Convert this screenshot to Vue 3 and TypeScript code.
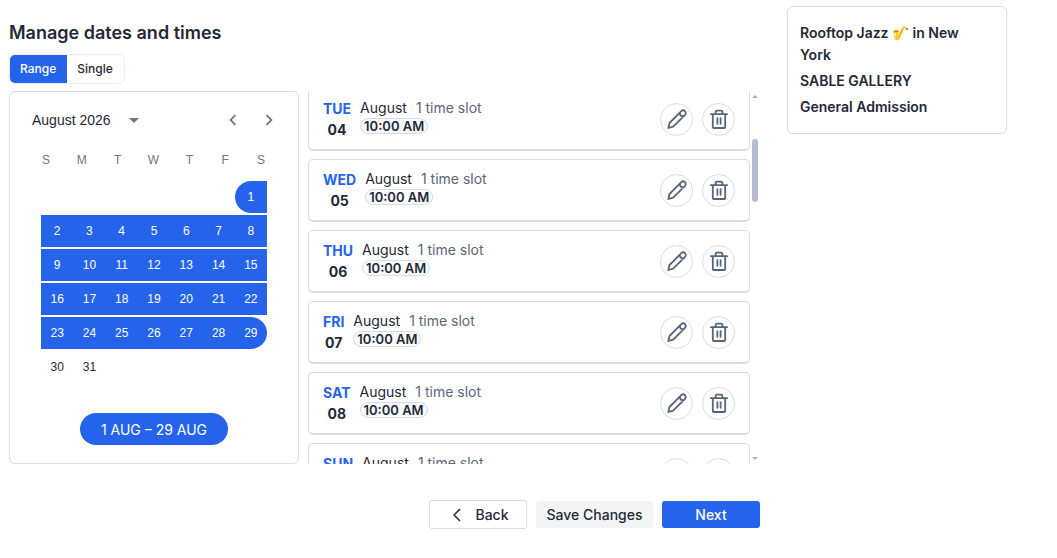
<script setup lang="ts">
import { computed, onMounted, ref } from 'vue'

interface DaySlot {
  day: number
  label: string
  weekday: string
}

const weekdayNames = ['SUN', 'MON', 'TUE', 'WED', 'THU', 'FRI', 'SAT']
const weekdayInitials = ['S', 'M', 'T', 'W', 'T', 'F', 'S']
const firstWeekday = 6
const rangeStart = 1
const rangeEnd = 29
const rowPitch = 71

const slots: DaySlot[] = Array.from({ length: rangeEnd }, (_, i) => ({
  day: i + 1,
  label: String(i + 1).padStart(2, '0'),
  weekday: weekdayNames[(firstWeekday + i) % 7],
}))

const days = Array.from({ length: 31 }, (_, i) => i + 1)
const mode = ref<'range' | 'single'>('range')

// The list only renders the rows inside its viewport; spacers stand in for the rest.
const list = ref<HTMLElement | null>(null)
const scrollTop = ref(3 * rowPitch + 3)
const viewHeight = ref(373)
const total = slots.length * rowPitch
const firstRow = computed(() => Math.floor(scrollTop.value / rowPitch))
const lastRow = computed(() => Math.min(slots.length, Math.ceil((scrollTop.value + viewHeight.value) / rowPitch)))
const visible = computed(() => slots.slice(firstRow.value, lastRow.value))
const before = computed(() => ({ height: `${firstRow.value * rowPitch}px` }))
const after = computed(() => ({ height: `${(slots.length - lastRow.value) * rowPitch}px` }))
const thumb = computed(() => ({
  top: `${(scrollTop.value / total) * 100}%`,
  height: `${(viewHeight.value / total) * 100}%`,
}))

function onScroll() {
  if (!list.value) return
  scrollTop.value = list.value.scrollTop
  viewHeight.value = list.value.clientHeight
}

onMounted(() => {
  if (list.value) list.value.scrollTop = scrollTop.value
})
</script>

<template>
  <div class="page">
    <main class="main">
      <h1 class="title">Manage dates and times</h1>
      <div class="toggle">
        <button type="button" :class="{ on: mode === 'range' }" @click="mode = 'range'">Range</button>
        <button type="button" :class="{ on: mode === 'single' }" @click="mode = 'single'">Single</button>
      </div>

      <div class="panels">
        <section class="calendar" aria-label="Calendar">
          <div class="cal-head">
            <button type="button" class="month">
              August 2026
              <svg width="10" height="5" viewBox="0 0 10 5" aria-hidden="true"><path d="M0 0h10L5 5z" fill="#757575" /></svg>
            </button>
            <button type="button" class="arrow" aria-label="Previous month">
              <svg width="22" height="22" viewBox="0 0 24 24" aria-hidden="true"><path d="M15.4 7.4 14 6l-6 6 6 6 1.4-1.4-4.6-4.6z" fill="#757575" /></svg>
            </button>
            <button type="button" class="arrow" aria-label="Next month">
              <svg width="22" height="22" viewBox="0 0 24 24" aria-hidden="true"><path d="M10 6 8.6 7.4l4.6 4.6-4.6 4.6L10 18l6-6z" fill="#757575" /></svg>
            </button>
          </div>
          <div class="weekdays">
            <span v-for="(w, i) in weekdayInitials" :key="i">{{ w }}</span>
          </div>
          <div class="days">
            <button
              v-for="d in days"
              :key="d"
              type="button"
              class="day"
              :class="{ picked: d >= rangeStart && d <= rangeEnd, first: d === rangeStart, last: d === rangeEnd }"
            >{{ d }}</button>
          </div>
          <button type="button" class="range">1 AUG – 29 AUG</button>
        </section>

        <div ref="list" class="list" @scroll="onScroll">
          <div :style="before"></div>
          <article v-for="s in visible" :key="s.day" class="slot">
            <div class="date">
              <span class="wd">{{ s.weekday }}</span>
              <span class="num">{{ s.label }}</span>
            </div>
            <div class="info">
              <div class="line"><span>August</span><span class="count">1 time slot</span></div>
              <span class="time">10:00 AM</span>
            </div>
            <div class="actions">
              <button type="button" class="round" :aria-label="`Edit August ${s.day}`">
                <svg width="24" height="24" viewBox="0 0 24 24" aria-hidden="true"><path d="M3.3 21 4.5 16 16.3 4.2a2.6 2.6 0 0 1 3.7 3.7L8.2 19.7zM14.7 5.8q.3 3.4 3.7 3.7" /></svg>
              </button>
              <button type="button" class="round" :aria-label="`Delete August ${s.day}`">
                <svg width="24" height="24" viewBox="0 0 24 24" aria-hidden="true"><path d="M3.9 7.2h16.2M5.8 7.2v12.7q0 1.1 1.1 1.1h10.2q1.1 0 1.1-1.1V7.2M8.6 7.2V4.9q0-1.3 1.3-1.3h4.2q1.3 0 1.3 1.3v2.3M10.4 11.2v5.6M13.6 11.2v5.6" /></svg>
              </button>
            </div>
          </article>
          <div :style="after"></div>
        </div>

        <div class="scrollbar" aria-hidden="true">
          <svg width="6" height="3" viewBox="0 0 6 3"><path d="M0 3h6L3 0z" fill="#a9b5c6" /></svg>
          <div class="track"><div class="thumb" :style="thumb"></div></div>
          <svg width="6" height="3" viewBox="0 0 6 3"><path d="M0 0h6L3 3z" fill="#a9b5c6" /></svg>
        </div>
      </div>

      <div class="footer">
        <button type="button" class="btn back">
          <svg width="8" height="14" viewBox="0 0 8 14" aria-hidden="true"><path d="M7 1 1 7l6 6" fill="none" stroke="#1f2937" stroke-width="1.5" /></svg>
          Back
        </button>
        <button type="button" class="btn save">Save Changes</button>
        <button type="button" class="btn next">Next</button>
      </div>
    </main>

    <aside class="summary">
      <p>Rooftop Jazz 🎷 in New York</p>
      <p>SABLE GALLERY</p>
      <p>General Admission</p>
    </aside>
  </div>
</template>

<style>
body {
  background: #fff;
}
</style>

<style scoped>
.page {
  display: grid;
  grid-template-columns: minmax(0, 1fr) 220px;
  gap: 27px;
  align-items: start;
  padding: 6px 50px 0 9px;
  font-family: Inter, "Liberation Sans", sans-serif;
  font-size: 14px;
  color: #1f2937;
}
button {
  margin: 0;
  padding: 0;
  border: 0;
  background: none;
  font: inherit;
  color: inherit;
  cursor: pointer;
}
svg {
  display: block;
}
.title {
  margin: 14px 0 8px;
  font-size: 18px;
  line-height: 26px;
  font-weight: 600;
}
.toggle {
  display: flex;
  width: max-content;
  height: 30px;
  box-sizing: border-box;
  border: 1px solid #eceff4;
  border-radius: 6px;
  overflow: hidden;
  font-size: 12px;
  font-weight: 500;
}
.toggle button {
  padding: 0 11px 1px 10px;
}
.toggle .on {
  background: #2563eb;
  color: #fff;
}
.panels {
  display: flex;
  height: 373px;
  margin-top: 7px;
}
.calendar {
  display: flex;
  flex-direction: column;
  flex: none;
  width: 290px;
  box-sizing: border-box;
  margin-right: 9px;
  border: 1px solid #d6dce8;
  border-radius: 6px;
}
.cal-head {
  display: flex;
  align-items: center;
  margin: 10px 11px 0 22px;
  height: 36px;
}
.month {
  display: flex;
  align-items: center;
  gap: 18px;
  margin-right: auto;
  font-family: "Liberation Sans", sans-serif;
}
.arrow {
  display: grid;
  place-items: center;
  width: 36px;
  height: 36px;
}
.weekdays {
  display: grid;
  grid-template-columns: repeat(7, 1fr);
  margin: 14px 19px 13px 18px;
  font-family: "Liberation Sans", sans-serif;
  font-size: 12px;
  line-height: 16px;
  text-align: center;
  color: #757575;
}
.days {
  display: grid;
  grid-template-columns: repeat(7, 1fr);
  grid-auto-rows: 32px;
  row-gap: 2px;
  margin: 0 31px;
  font-family: "Liberation Sans", sans-serif;
  font-size: 12px;
}
.picked {
  background: #2563eb;
  color: #fff;
}
.first {
  grid-column: 7;
  border-radius: 16px 0 0 16px;
}
.last {
  border-radius: 0 16px 16px 0;
}
.range {
  align-self: center;
  width: 148px;
  height: 32px;
  margin-top: 30px;
  border-radius: 16px;
  background: #2563eb;
  color: #fff;
}
.list {
  flex: 1;
  min-width: 0;
  overflow-y: auto;
  overflow-anchor: none;
  scrollbar-width: none;
}
.slot {
  display: flex;
  gap: 9px;
  height: 63px;
  box-sizing: border-box;
  margin-bottom: 8px;
  padding: 9px 14px 8px 14px;
  border: 1px solid #d6dce8;
  border-bottom-width: 2px;
  border-radius: 5px;
}
.date {
  display: flex;
  flex-direction: column;
  align-items: center;
  font-weight: 700;
  line-height: 21px;
}
.wd {
  color: #2563eb;
}
.info {
  display: flex;
  flex-direction: column;
  align-items: flex-start;
}
.line {
  display: flex;
  gap: 9px;
  line-height: 20px;
}
.count {
  color: #5b6878;
}
.time {
  padding: 0 3px;
  border: 1px solid #d6dce8;
  border-radius: 8px;
  background: #f8fafc;
  font-size: 13px;
  line-height: 14px;
  font-weight: 600;
}
.actions {
  display: flex;
  align-items: center;
  gap: 9px;
  margin-left: auto;
  padding-bottom: 1px;
}
.round {
  display: grid;
  place-items: center;
  width: 33px;
  height: 33px;
  border: 1px solid #d6dce8;
  border-radius: 50%;
}
.round svg {
  fill: none;
  stroke: #56657a;
  stroke-width: 1.8;
  stroke-linejoin: round;
  stroke-linecap: round;
}
.scrollbar {
  display: flex;
  flex-direction: column;
  align-items: center;
  width: 10px;
  box-sizing: border-box;
  padding: 4px 0;
}
.track {
  position: relative;
  flex: 1;
  width: 6px;
  margin: 4px 0;
}
.thumb {
  position: absolute;
  left: 0;
  width: 6px;
  border-radius: 3px;
  background: #b4bfce;
}
.footer {
  display: flex;
  align-items: center;
  justify-content: flex-end;
  gap: 9px;
  margin-top: 36px;
}
.btn {
  width: 98px;
  height: 27px;
  border-radius: 3px;
  font-weight: 500;
}
.back {
  display: flex;
  align-items: center;
  justify-content: center;
  gap: 14px;
  height: 29px;
  box-sizing: border-box;
  padding-left: 6px;
  border: 1px solid #d6dce8;
}
.save {
  width: 117px;
  background: #f3f4f6;
}
.next {
  background: #2563eb;
  color: #fff;
}
.summary {
  box-sizing: border-box;
  padding: 15px 24px 15px 12px;
  border: 1px solid #d6dce8;
  border-radius: 6px;
  line-height: 22px;
  font-weight: 600;
}
.summary p {
  margin: 0;
}
.summary p + p {
  margin-top: 4px;
}
</style>
